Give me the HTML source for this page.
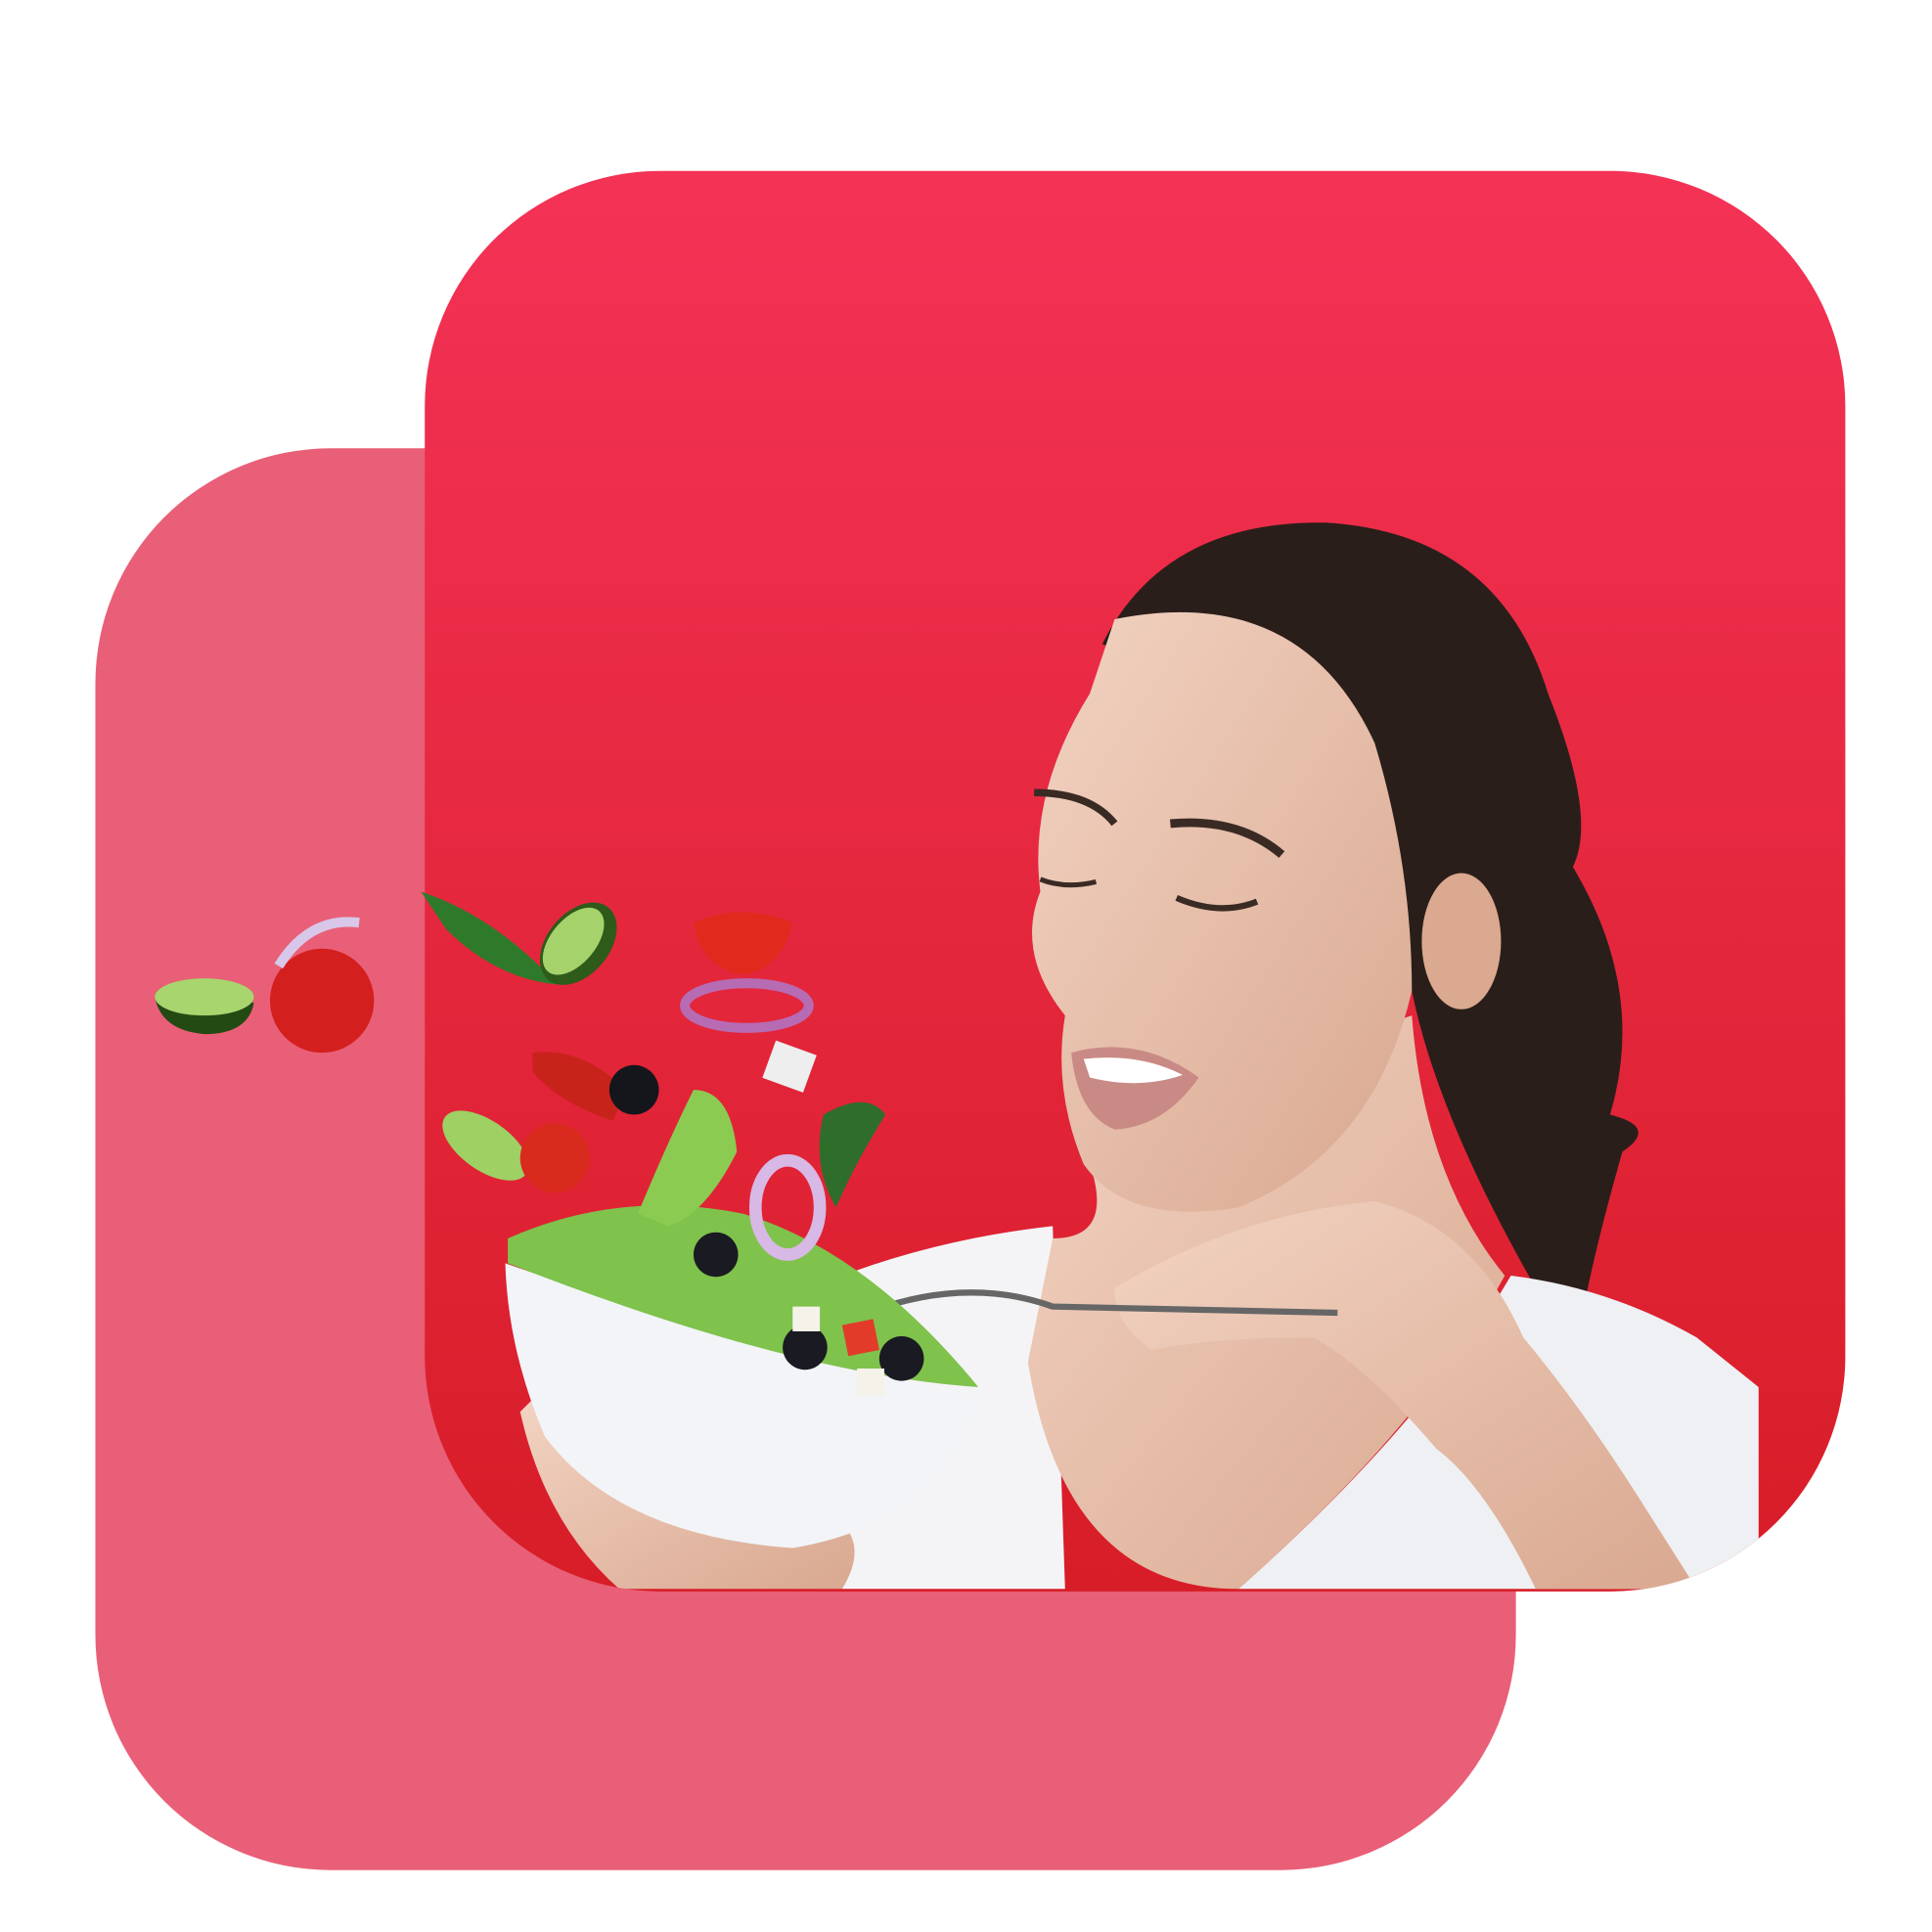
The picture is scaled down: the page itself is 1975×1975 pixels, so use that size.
<!DOCTYPE html>
<html><head><meta charset="utf-8"><style>
html,body{margin:0;padding:0;background:#fff;width:1975px;height:1975px;overflow:hidden}
svg{display:block}
</style></head><body>
<svg width="1975" height="1975" viewBox="0 0 1560 1560" xmlns="http://www.w3.org/2000/svg">
<defs>
<linearGradient id="rg" x1="0" y1="0" x2="0" y2="1">
<stop offset="0" stop-color="#F43256"/><stop offset="1" stop-color="#D71D27"/>
</linearGradient>
<linearGradient id="skin" x1="0" y1="0" x2="1" y2="1">
<stop offset="0" stop-color="#F2D3C2"/><stop offset="1" stop-color="#D9A890"/>
</linearGradient>
<clipPath id="front"><rect x="343" y="138" width="1147" height="1147" rx="190"/></clipPath>
</defs>
<rect x="77" y="362" width="1147" height="1148" rx="190" fill="#E95F77"/>
<rect x="343" y="138" width="1147" height="1147" rx="190" fill="url(#rg)"/>
<g clip-path="url(#front)">
<!-- hair -->
<path d="M890 520 Q940 420 1070 422 Q1210 430 1250 560 Q1290 660 1270 700 Q1330 800 1300 900 Q1340 910 1310 930 Q1290 1000 1280 1050 L1240 1040 Q1160 900 1140 800 L1100 600 Z" fill="#2a1e1a"/>
<!-- shirt -->
<path d="M680 1030 Q760 1000 850 990 L860 1283 L680 1283 Z" fill="#F4F4F6"/>
<path d="M1000 1283 Q1150 1150 1220 1030 Q1300 1040 1370 1080 L1420 1120 L1420 1283 Z" fill="#EEF0F3"/>
<!-- neck/chest -->
<path d="M880 940 Q900 1000 850 1000 L830 1100 Q860 1283 1000 1283 Q1150 1150 1215 1030 Q1150 950 1140 820 L900 900 Z" fill="url(#skin)"/>
<!-- face -->
<path d="M900 500 Q1050 470 1110 600 Q1140 700 1140 800 Q1110 930 1000 975 Q910 990 875 940 Q850 880 860 820 Q820 770 840 720 Q830 640 880 560 Z" fill="url(#skin)"/>
<ellipse cx="1180" cy="760" rx="32" ry="55" fill="#DBA98F"/>
<path d="M835 640 Q880 640 900 665" stroke="#3a2a24" stroke-width="6" fill="none"/>
<path d="M945 665 Q1000 660 1035 690" stroke="#3a2a24" stroke-width="7" fill="none"/>
<path d="M950 725 Q985 740 1015 728" stroke="#3a2a24" stroke-width="5" fill="none"/>
<path d="M840 710 Q860 718 885 712" stroke="#3a2a24" stroke-width="4" fill="none"/>
<path d="M865 850 Q920 835 968 870 Q940 910 900 912 Q870 900 865 850Z" fill="#C98A86"/>
<path d="M875 855 Q920 850 955 868 Q920 880 880 870Z" fill="#fff"/>
<!-- arm & hand -->
<path d="M900 1040 Q1000 980 1110 970 Q1190 990 1230 1080 Q1280 1140 1330 1220 L1370 1283 L1240 1283 Q1200 1200 1160 1170 Q1100 1100 1060 1080 Q980 1080 930 1090 Q900 1070 900 1040Z" fill="url(#skin)"/>
<path d="M700 1060 Q780 1030 850 1055 L1080 1060" stroke="#666" stroke-width="5" fill="none"/>
<!-- left hand -->
<path d="M420 1140 Q440 1230 500 1283 L680 1283 Q700 1250 680 1230 L430 1130Z" fill="url(#skin)"/>
</g>
<!-- bowl -->
<path d="M408 1020 Q520 1060 790 1130 Q760 1230 640 1250 Q500 1240 440 1160 Q410 1090 408 1020Z" fill="#F2F4F8"/>
<path d="M410 1000 Q500 960 600 980 Q700 1010 790 1120 Q640 1110 410 1020Z" fill="#7FC24C"/>
<circle cx="650" cy="1088" r="18" fill="#1a1a22"/><circle cx="728" cy="1097" r="18" fill="#1a1a22"/><circle cx="578" cy="1013" r="18" fill="#1a1a22"/>
<rect x="640" y="1055" width="22" height="20" fill="#f5f2ea"/><rect x="692" y="1105" width="22" height="22" fill="#f5f2ea"/>
<path d="M680 1070 l25 -5 5 25 -25 5z" fill="#E23B2A"/>
<path d="M515 980 Q540 920 560 880 Q590 880 595 930 Q570 980 540 990Z" fill="#8BCB52"/>
<!-- flying veggies -->
<path d="M125 805 Q165 785 205 810 Q200 835 165 835 Q130 832 125 805Z" fill="#244a14"/>
<ellipse cx="165" cy="805" rx="40" ry="15" fill="#A8D56E"/>
<circle cx="260" cy="808" r="42" fill="#D41F1F"/>
<path d="M225 780 Q250 740 290 745" stroke="#d8c7e8" stroke-width="8" fill="none"/>
<path d="M340 720 Q400 740 450 795 Q400 790 360 750Z" fill="#2f7a2a"/>
<ellipse cx="467" cy="762" rx="25" ry="38" transform="rotate(40 467 762)" fill="#2e5b1a"/>
<ellipse cx="463" cy="760" rx="18" ry="32" transform="rotate(40 463 760)" fill="#A6D26C"/>
<path d="M560 745 Q600 728 640 745 Q630 785 598 787 Q565 780 560 745Z" fill="#E02A1E"/>
<ellipse cx="603" cy="812" rx="50" ry="18" fill="none" stroke="#B76BB3" stroke-width="8"/>
<path d="M430 850 Q470 845 505 880 L495 905 Q450 890 430 865Z" fill="#C8231B"/>
<circle cx="512" cy="880" r="20" fill="#15151c"/>
<rect x="620" y="845" width="35" height="32" fill="#EEE" transform="rotate(20 637 861)"/>
<ellipse cx="392" cy="925" rx="40" ry="20" transform="rotate(35 392 925)" fill="#9ED064"/>
<circle cx="448" cy="935" r="28" fill="#D92A1E"/>
<ellipse cx="636" cy="975" rx="26" ry="38" fill="none" stroke="#D8B8E4" stroke-width="10"/>
<path d="M665 900 Q700 880 715 900 Q690 940 675 975 Q655 940 665 900Z" fill="#2f6e2a"/>
</svg>
</body></html>
